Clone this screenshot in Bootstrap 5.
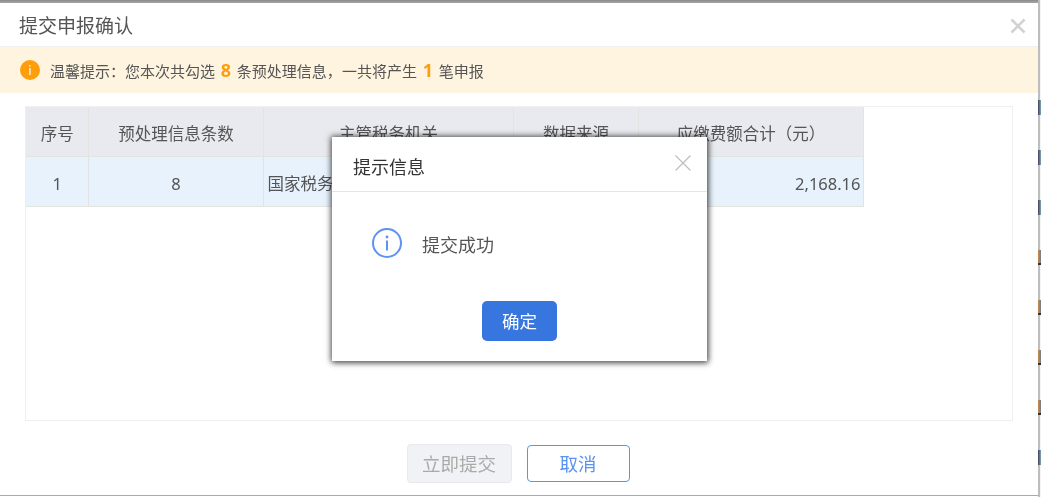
<!DOCTYPE html>
<html lang="zh">
<head>
<meta charset="utf-8">
<link href="https://cdn.jsdelivr.net/npm/bootstrap@5.3.0/dist/css/bootstrap.min.css" rel="stylesheet">
<style>
html,body{height:497px;overflow:hidden;margin:0}
body{background:#fff;font-family:"Noto Sans","Noto Sans CJK SC",sans-serif;color:#555;position:relative}
.shot{height:497px;padding-top:3px;position:relative;filter:blur(.35px)}
.tc{font-family:"Noto Sans CJK TC",sans-serif}
.top-edge{position:absolute;left:0;top:0;width:1039px;height:3px;background:linear-gradient(#8a8a8a,#a8a8a8)}
.side-edge{position:absolute;left:1038px;top:0;width:3px;height:497px;padding-top:100px;border-left:2px solid #bdbdbd;background:#f4f4f4}
.side-bit{height:15px;margin:0 0 35px -2px;width:3px;background:linear-gradient(90deg,#3f3f5a,#7fa9b5)}
.side-bit.warm{background:linear-gradient(90deg,#c98a4a,#6f7f8f);border-bottom:2px solid #333}
.outer-dlg{width:1038px;height:493px;background:#fff;border-bottom:1px solid #aaa}
.outer-head{height:44px;padding:3px 19px 0;border-bottom:1px solid #f1f1f1}
.outer-title{font-size:19px;color:#555}
.outer-x{width:16px;height:16px;margin-right:-7px;margin-top:-1px}
.tip-bar{height:46px;background:#fff4e0;padding-left:20px;font-size:15px;color:#555}
.tip-dot{width:20px;height:20px;border-radius:50%;background:#ff9d0a;color:#fff;font-size:13px;line-height:20px;text-align:center;margin-right:10px;flex:none}
.tip-num{color:#ff9d0a;font-size:18px;font-weight:700;margin:0 5.75px}
.frame{margin:13px 25px 0 25px;height:315px;border:1px solid #eeeef3;background:#fff}
.data-tbl{width:837px;table-layout:fixed;border-collapse:collapse;margin:0;color:#555}
.data-tbl th,.data-tbl td{height:50px;border:1px solid #e2e5df;padding:6px 0 0 1px;vertical-align:middle;font-weight:400;text-align:center;font-size:16.5px}
.data-tbl tr:first-child th{border-top:0;height:49px}
.data-tbl th:first-child,.data-tbl td:first-child{border-left:0}
.data-tbl th{background:#e9eaef}
.data-tbl td{background:#e7f2fd}
.data-tbl td.cell-l{text-align:left;padding-left:4px}
.data-tbl td.cell-r{text-align:right;padding-right:2px}
.foot-bar{gap:15px;padding-top:23px;margin-left:-2px}
.btn-off{width:105px;height:39px;padding:0;background:#f1f2f5;border:1px solid #e8e9ec;color:#aaa;font-size:18.5px;border-radius:4px;opacity:1}
.btn-off:disabled{background:#f1f2f5;border-color:#e8e9ec;color:#aaa;opacity:1}
.btn-line{width:103px;height:37px;padding:0;background:#fff;border:1px solid #5b93f2;color:#5b93f2;font-size:18.5px;border-radius:4px}
.msg-dlg{position:absolute;left:332px;top:137px;width:375px;height:224px;background:#fff;box-shadow:0 0 6px 1px rgba(0,0,0,.6),1px 2px 6px rgba(0,0,0,.35)}
.msg-head{height:55px;padding:0 16px 0 21px;border-bottom:1px solid #e6e6e6}
.msg-title{font-size:18px;color:#333;margin-top:7px}
.msg-x{width:16px;height:16px;margin-top:-2px}
.msg-body{padding:36px 0 0 40px;height:109px;font-size:18px;color:#555;gap:20px;line-height:30px}
.msg-text{padding-top:2px}
.msg-foot{margin-top:0}
.btn-ok{width:75px;height:40px;padding:0;background:#3775df;border:0;color:#fff;font-size:17.5px;border-radius:5px}
</style>
</head>
<body>
<div class="shot">
<div class="top-edge"></div>
<div class="side-edge">
  <div class="side-bit"></div><div class="side-bit"></div><div class="side-bit"></div>
  <div class="side-bit warm"></div><div class="side-bit warm"></div><div class="side-bit warm"></div><div class="side-bit warm"></div>
  <div class="side-bit"></div>
</div>
<div class="outer-dlg">
  <div class="outer-head d-flex align-items-center justify-content-between">
    <span class="outer-title">提交申报确认</span>
    <svg class="outer-x" viewBox="0 0 16 16"><path d="M1.5 1.5L14.5 14.5M14.5 1.5L1.5 14.5" stroke="#d2d2d2" stroke-width="2.6" fill="none"/></svg>
  </div>
  <div class="tip-bar d-flex align-items-center">
    <span class="tip-dot">i</span>
    <span>温馨提示<span class="tc">：</span>您本次共勾选<span class="tip-num">8</span>条预处理信息<span class="tc">，</span>一共将产生<span class="tip-num">1</span>笔申报</span>
  </div>
  <div class="frame">
    <table class="data-tbl">
      <colgroup><col style="width:62px"><col style="width:175px"><col style="width:250px"><col style="width:125px"><col style="width:225px"></colgroup>
      <tr><th>序号</th><th>预处理信息条数</th><th>主管税务机关</th><th>数据来源</th><th>应缴费额合计<span class="tc">（</span>元<span class="tc">）</span></th></tr>
      <tr><td>1</td><td>8</td><td class="cell-l">国家税务总局</td><td></td><td class="cell-r">2,168.16</td></tr>
    </table>
  </div>
  <div class="foot-bar d-flex justify-content-center align-items-center">
    <button class="btn btn-off" disabled>立即提交</button>
    <button class="btn btn-line">取消</button>
  </div>
</div>
<div class="msg-dlg">
  <div class="msg-head d-flex align-items-center justify-content-between">
    <span class="msg-title">提示信息</span>
    <svg class="msg-x" viewBox="0 0 16 16"><path d="M.5.5L15.5 15.5M15.5.5L.5 15.5" stroke="#bdbdbd" stroke-width="1.2" fill="none"/></svg>
  </div>
  <div class="msg-body d-flex align-items-start">
    <svg width="30" height="30" viewBox="0 0 30 30"><circle cx="15" cy="15" r="14" fill="none" stroke="#5b93f2" stroke-width="2"/><circle cx="15" cy="9" r="1.4" fill="#5b93f2"/><rect x="14" y="12.5" width="2" height="10" fill="#5b93f2"/></svg>
    <span class="msg-text">提交成功</span>
  </div>
  <div class="msg-foot d-flex justify-content-center">
    <button class="btn btn-ok">确定</button>
  </div>
</div>
</div>
</body>
</html>
